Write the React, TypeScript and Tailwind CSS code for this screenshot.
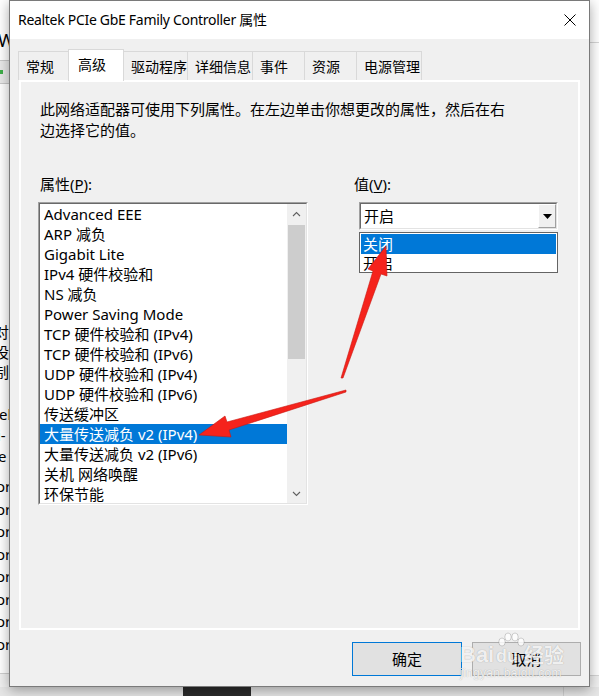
import React from 'react';

const font = "font-['Noto_Sans','Noto_Sans_CJK_SC',sans-serif]";

const tabs = [
  { label: '常规', w: 'w-[51px]' },
  { label: '高级', w: 'w-[56px]', active: true },
  { label: '驱动程序', w: 'w-[65px]' },
  { label: '详细信息', w: 'w-[66px]' },
  { label: '事件', w: 'w-[53px]' },
  { label: '资源', w: 'w-[53px]' },
  { label: '电源管理', w: 'w-[66px]' },
];

const properties = [
  'Advanced EEE',
  'ARP 减负',
  'Gigabit Lite',
  'IPv4 硬件校验和',
  'NS 减负',
  'Power Saving Mode',
  'TCP 硬件校验和 (IPv4)',
  'TCP 硬件校验和 (IPv6)',
  'UDP 硬件校验和 (IPv4)',
  'UDP 硬件校验和 (IPv6)',
  '传送缓冲区',
  '大量传送减负 v2 (IPv4)',
  '大量传送减负 v2 (IPv6)',
  '关机 网络唤醒',
  '环保节能',
];

const Chevron: React.FC<{ up?: boolean }> = ({ up }) => (
  <svg width="9" height="6" viewBox="0 0 9 6" className="text-[#606060]">
    <polyline
      points={up ? '1,5 4.5,1.5 8,5' : '1,1 4.5,4.5 8,1'}
      fill="none"
      stroke="currentColor"
      strokeWidth="1.1"
    />
  </svg>
);

// bits of the window that sits behind the dialog
const LeftStrip: React.FC = () => (
  <div className="w-[9px] shrink-0 overflow-hidden bg-white flex flex-col text-[15px] leading-[20px] text-black whitespace-nowrap">
    <div className="h-[31px]" />
    <div className="h-[18px] text-[18px] leading-[18px] -ml-[2px]">W</div>
    <div className="h-[12px] border-b border-[#c8c8c8]" />
    <div className="h-[22px] bg-[#e9e9e9] flex items-center">
      <div className="w-[3px] h-[4px] bg-[#3fae49]" />
    </div>
    <div className="h-[1px] bg-[#c8c8c8]" />
    <div className="h-[238px]" />
    <div className="-ml-[6px]">对</div>
    <div className="-ml-[6px]">设</div>
    <div className="-ml-[6px]">制</div>
    <div className="h-[21px]" />
    <div className="-ml-[1px] leading-[22px]">ele</div>
    <div className="-ml-[3px] leading-[21px]">i-</div>
    <div className="-ml-[2px] leading-[21px]">e (</div>
    <div className="h-[8px]" />
    {Array.from({ length: 8 }).map((_, i) => (
      <div key={i} className="-ml-[4px] leading-[22.5px]">
        or
      </div>
    ))}
    <div className="flex-1" />
    <div className="h-[14px] border-t border-[#cfcfcf] bg-[#f0f0f0]" />
  </div>
);

const RightStrip: React.FC = () => (
  <div className="w-[9px] shrink-0 bg-white flex flex-col">
    <div className="h-[43px] border-b border-[#d6d6d6]" />
    <div className="flex-1" />
    <div className="h-[12px] border-t border-[#d6d6d6] bg-[#f0f0f0]" />
  </div>
);

const App: React.FC = () => {
  return (
    <div className={`relative w-[599px] h-[696px] overflow-hidden bg-[#f0f0f0] ${font}`}>
      <div className="flex h-[687px]">
        <LeftStrip />

        {/* Dialog */}
        <div className="relative z-10 w-[581px] shrink-0 flex flex-col border border-[#7a7a7a] bg-[#f0f0f0] shadow-[0_3px_12px_rgba(0,0,0,0.35)]">
          {/* Title bar */}
          <div className="h-[38px] bg-white flex items-center justify-between pl-[8px] pr-[13px]">
            <span className="text-[14px] leading-[20px] tracking-[-0.3px] text-black">
              Realtek PCIe GbE Family Controller 属性
            </span>
            <svg width="12" height="12" viewBox="0 0 12 12">
              <line x1="0.5" y1="0.5" x2="11.5" y2="11.5" stroke="#000" strokeWidth="1" />
              <line x1="11.5" y1="0.5" x2="0.5" y2="11.5" stroke="#000" strokeWidth="1" />
            </svg>
          </div>

          <div className="flex flex-col px-[9px] pt-[10px]">
            {/* Tabs */}
            <div className="flex items-end h-[31px] -ml-[1px]">
              {tabs.map((t, i) => (
                <div
                  key={t.label}
                  className={`${t.w} ${i > 0 ? '-ml-px' : ''} border-x border-t border-[#d9d9d9] flex items-center text-[14px] text-black ${
                    t.active
                      ? 'relative z-10 h-[32px] -mb-px bg-white pl-[9px] pb-[3px]'
                      : 'h-[29px] bg-[#f0f0f0] pl-[7px]'
                  }`}
                >
                  {t.label}
                </div>
              ))}
            </div>

            {/* Tab panel */}
            <div className="h-[550px] border-2 border-white bg-[#f0f0f0] pl-[17px] text-[15px] text-black">
              <p className="ml-[2px] mt-[17px] leading-[21px]">
                此网络适配器可使用下列属性。在左边单击你想更改的属性，然后在右
                <br />
                边选择它的值。
              </p>

              <div className="flex mt-[33px]">
                {/* Property list */}
                <div className="w-[270px] flex flex-col">
                  <div className="ml-[2px] leading-[21px]">
                    属性(<span className="underline underline-offset-2">P</span>):
                  </div>
                  <div className="mt-[7px] h-[303px] border border-t-[#a0a0a0] border-l-[#a0a0a0] border-r-[#ffffff] border-b-[#ffffff]">
                    <div className="h-full flex border border-t-[#696969] border-l-[#696969] border-r-[#e3e3e3] border-b-[#e3e3e3] bg-white">
                      <div className="flex-1 overflow-hidden">
                        {properties.map((p, i) => (
                          <div
                            key={p}
                            className={`h-[20px] leading-[20px] pl-[4px] whitespace-nowrap ${
                              i === 11 ? 'bg-[#0078d7] text-white' : ''
                            }`}
                          >
                            {p}
                          </div>
                        ))}
                      </div>
                      <div className="w-[19px] bg-[#f0f0f0] flex flex-col">
                        <div className="h-[19px] flex items-center justify-center">
                          <Chevron up />
                        </div>
                        <div className="mt-[2px] mx-[1px] h-[134px] bg-[#cdcdcd]" />
                        <div className="flex-1" />
                        <div className="h-[19px] flex items-center justify-center">
                          <Chevron />
                        </div>
                      </div>
                    </div>
                  </div>
                </div>

                {/* Value */}
                <div className="ml-[46px] flex flex-col">
                  <div className="leading-[21px]">
                    值(<span className="underline underline-offset-2">V</span>):
                  </div>
                  <div className="ml-[5px] mt-[7px] w-[199px] h-[28px] border border-t-[#a0a0a0] border-l-[#a0a0a0] border-r-[#ffffff] border-b-[#ffffff]">
                    <div className="h-full flex border border-t-[#696969] border-l-[#696969] border-r-[#e3e3e3] border-b-[#e3e3e3] bg-white">
                      <div className="flex-1 pl-[3px] leading-[24px]">开启</div>
                      <div className="w-[18px] h-full flex items-center justify-center bg-[#f0f0f0] border border-t-white border-l-white border-r-[#a0a0a0] border-b-[#a0a0a0]">
                        <svg width="9" height="5" viewBox="0 0 9 5">
                          <polygon points="0,0 9,0 4.5,5" fill="#000" />
                        </svg>
                      </div>
                    </div>
                  </div>
                  <div className="ml-[5px] mt-[2px] w-[199px] h-[41px] border border-[#646464] bg-white">
                    <div className="h-[20px] mx-[1px] mt-px leading-[20px] pl-[2px] bg-[#0078d7] text-white">
                      关闭
                    </div>
                    <div className="h-[19px] leading-[19px] pl-[3px]">开启</div>
                  </div>
                </div>
              </div>
            </div>

            {/* Buttons */}
            <div className="flex justify-end gap-[10px] mt-[12px]">
              <button className="w-[110px] h-[34px] border border-[#0078d7] bg-[#e1e1e1] text-[15px] text-black">
                确定
              </button>
              <button className="w-[109px] h-[34px] -mr-px border border-[#adadad] bg-[#e1e1e1] text-[15px] text-black">
                取消
              </button>
            </div>
          </div>
        </div>

        <RightStrip />
      </div>

      {/* strip under the dialog */}
      <div className="h-[9px] flex bg-[#e6e6e6]">
        <div className="ml-[183px] w-[68px] bg-[#2b2b2b]" />
        <div className="ml-[312px] w-px bg-[#cfcfcf]" />
      </div>

      {/* Red annotation arrows */}
      <svg
        className="absolute left-0 top-0 z-20 pointer-events-none"
        width="599"
        height="696"
        viewBox="0 0 599 696"
      >
        <polygon
          points="386,246 387,276 381,274 343,378 341,378 373,271 368,269"
          fill="#f5231c"
          stroke="#c81a12"
          strokeWidth="0.6"
          strokeLinejoin="round"
        />
        <polygon
          points="199,435 231,437 229,430 346,392 346,390 227,422 225,416"
          fill="#f5231c"
          stroke="#c81a12"
          strokeWidth="0.6"
          strokeLinejoin="round"
        />
      </svg>

      {/* Baidu jingyan watermark */}
      <div className="absolute z-20 left-[460px] top-[630px] w-[110px] h-[52px] pointer-events-none text-white/85 [text-shadow:0_0_1px_rgba(0,0,0,0.35)]">
        <span className="absolute left-0 top-[14px] text-[22px] leading-[22px] font-bold font-['Liberation_Sans',sans-serif]">
          Bai
        </span>
        <svg className="absolute left-[36px] top-[2px]" width="30" height="26" viewBox="0 0 30 26">
          <g fill="rgba(255,255,255,0.8)" stroke="rgba(0,0,0,0.22)" strokeWidth="0.8">
            <ellipse cx="6" cy="10" rx="3.2" ry="4" />
            <ellipse cx="12" cy="5" rx="3.2" ry="4" />
            <ellipse cx="19" cy="5" rx="3.2" ry="4" />
            <ellipse cx="25" cy="10" rx="3.2" ry="4" />
          </g>
        </svg>
        <span className="absolute left-[36px] top-[16px] text-[18px] leading-[20px] font-bold font-['Liberation_Sans',sans-serif]">
          du
        </span>
        <span className="absolute left-[64px] top-[15px] text-[20px] leading-[22px] font-bold">
          经验
        </span>
        <span className="absolute left-0 top-[37px] text-[12px] leading-[13px] tracking-[0.3px] font-['Liberation_Sans',sans-serif]">
          jingyan.baidu.com
        </span>
      </div>
    </div>
  );
};

export default App;
